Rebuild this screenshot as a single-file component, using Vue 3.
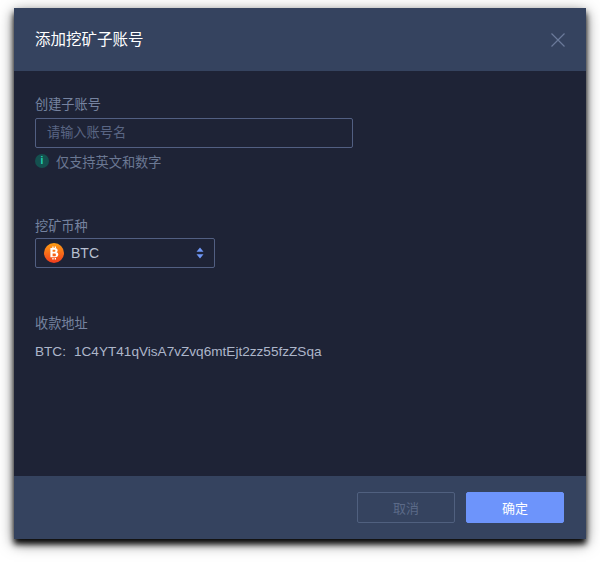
<template>
  <div class="page">
    <div class="modal">
      <div class="modal-header">
        <h3 class="modal-title">添加挖矿子账号</h3>
        <svg class="btn-close" width="14" height="14" viewBox="0 0 14 14">
          <path d="M.5.5 13.5 13.5M13.5.5.5 13.5" stroke="#6a7a9a" stroke-width="1.2" fill="none" />
        </svg>
      </div>

      <div class="modal-body">
        <section class="field field-name">
          <label class="field-label">创建子账号</label>
          <div class="input-box">请输入账号名</div>
          <div class="hint">
            <span class="hint-icon">i</span>
            <span>仅支持英文和数字</span>
          </div>
        </section>

        <section class="field field-coin">
          <label class="field-label">挖矿币种</label>
          <div class="select-box">
            <svg class="coin-icon" width="20" height="20" viewBox="0 0 20 20">
              <defs>
                <linearGradient id="coinGrad" x1="0" y1="0" x2="0" y2="1">
                  <stop offset="0" stop-color="#ff9f14" />
                  <stop offset="1" stop-color="#f23c1e" />
                </linearGradient>
              </defs>
              <circle cx="10" cy="10" r="10" fill="url(#coinGrad)" />
              <path
                d="M6.4 4.9h4.5c1.7 0 2.8 1 2.8 2.4 0 .9-.4 1.6-1.2 2 1.1.3 1.8 1.2 1.8 2.3 0 1.6-1.2 2.7-3 2.7H6.4zM8.6 6.8v2h1.8c.6 0 1-.4 1-1s-.4-1-1-1zM8.6 10.6v2.6h2.1c.8 0 1.2-.5 1.2-1.3s-.4-1.3-1.2-1.3zM8.3 3.4h1.3v1.6H8.3zM10.7 3.4H12v1.6h-1.3zM8.3 15h1.3v1.6H8.3zM10.7 15H12v1.6h-1.3z"
                fill="#fff"
                fill-rule="evenodd"
              />
            </svg>
            <span class="coin-name">{{ coin }}</span>
            <svg class="select-arrows" width="8" height="12" viewBox="0 0 8 12">
              <path d="M4 0.5 7.5 4.8H.5zM4 11.5 .5 7.2h7z" fill="#6f97f5" />
            </svg>
          </div>
        </section>

        <section class="field">
          <label class="field-label">收款地址</label>
          <div class="address">
            <span class="address-coin">{{ coin }}:</span>
            <span>{{ address }}</span>
          </div>
        </section>
      </div>

      <div class="modal-footer">
        <button class="btn btn-cancel">取消</button>
        <button class="btn btn-ok">确定</button>
      </div>
    </div>
  </div>
</template>

<script setup>
const coin = 'BTC'
const address = '1C4YT41qVisA7vZvq6mtEjt2zz55fzZSqa'
</script>

<style>
html,
body {
  margin: 0;
  background: #fff;
}
</style>

<style scoped>
.page {
  width: 600px;
  height: 562px;
  box-sizing: border-box;
  padding: 8px 14px 23px;
  overflow: hidden;
  font-family: "Liberation Sans", "Noto Sans CJK SC", sans-serif;
}

.modal {
  height: 531px;
  display: flex;
  flex-direction: column;
  background: #1e2336;
  box-shadow: 0 5px 6px rgba(0, 0, 0, 0.95), 0 4px 14px rgba(0, 0, 0, 0.55);
}

.modal-header {
  height: 63px;
  flex-shrink: 0;
  display: flex;
  align-items: center;
  justify-content: space-between;
  padding: 0 21px;
  background: #35435f;
}

.modal-title {
  margin: 0 0 4px;
  font-size: 15.5px;
  font-weight: 400;
  color: #fff;
}

.btn-close {
  margin-top: 1px;
}

.modal-body {
  flex: 1;
  padding: 23px 21px 0;
}

.field-name {
  height: 122px;
}

.field-coin {
  height: 97px;
}

.field-label {
  display: block;
  height: 22px;
  line-height: 22px;
  font-size: 13.2px;
  color: #7683a0;
}

.input-box {
  width: 318px;
  height: 30px;
  margin-top: 2px;
  box-sizing: border-box;
  padding-left: 11px;
  line-height: 28px;
  font-size: 13.2px;
  color: #5a6684;
  border: 1px solid #525f82;
  border-radius: 2px;
}

.hint {
  display: flex;
  align-items: center;
  gap: 7px;
  margin-top: 3px;
  height: 20px;
  font-size: 13.2px;
  color: #6b7893;
}

.hint-icon {
  width: 14px;
  height: 14px;
  border-radius: 50%;
  background: #14504f;
  color: #25d4b0;
  font-size: 10px;
  font-weight: 700;
  line-height: 14px;
  text-align: center;
}

.select-box {
  width: 180px;
  height: 30px;
  box-sizing: border-box;
  display: flex;
  align-items: center;
  padding: 0 10px 0 8px;
  border: 1px solid #525f82;
  border-radius: 2px;
}

.coin-name {
  flex: 1;
  margin-left: 7px;
  font-size: 14px;
  color: #b8c0d1;
}

.address {
  display: flex;
  gap: 8px;
  margin-top: 7px;
  line-height: 20px;
  font-size: 13.6px;
  color: #adb6ca;
}

.modal-footer {
  height: 63px;
  flex-shrink: 0;
  box-sizing: border-box;
  display: flex;
  justify-content: flex-end;
  align-items: center;
  gap: 11px;
  padding: 0 22px;
  background: #35435f;
}

.btn {
  width: 98px;
  height: 31px;
  padding: 0;
  font-family: inherit;
  font-size: 13px;
  border-radius: 2px;
  cursor: pointer;
}

.btn-cancel {
  background: transparent;
  border: 1px solid #50607f;
  color: #5b6a88;
}

.btn-ok {
  background: #6d94fb;
  border: 1px solid #6d94fb;
  color: #fff;
}
</style>
